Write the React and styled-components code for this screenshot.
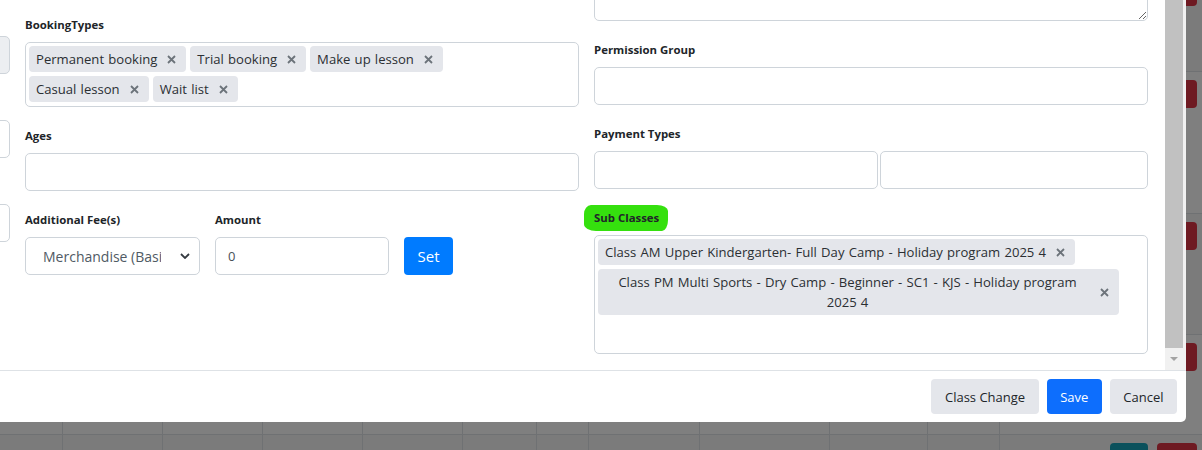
import React from 'react';
import styled, { createGlobalStyle } from 'styled-components';

const GlobalStyle = createGlobalStyle`
  html, body { margin: 0; padding: 0; }
  body {
    font-family: "Open Sans", "Noto Sans", sans-serif;
    color: #212529;
    background: #fff;
  }
  * { box-sizing: border-box; }
`;

const Page = styled.div`
  position: relative;
  width: 1202px;
  height: 450px;
  overflow: hidden;
`;

/* ---- the page behind the dialog ---- */
const BgTable = styled.div`
  display: flex;
  flex-direction: column;
  margin-top: -30px;
  background: #fff;
`;

const BgRow = styled.div`
  display: grid;
  grid-template-columns: 63px 100px 100px 100px 100px 74px 52px 111px 130px 98px 72px 1fr;
  height: ${p => p.$h}px;
  background: ${p => (p.$alt ? '#f7f7f7' : '#fff')};
  border-bottom: 1px solid #dee2e6;
`;

const BgCell = styled.div`
  border-right: 1px solid #dee2e6;
`;

const BgActions = styled.div`
  display: flex;
  justify-content: flex-end;
  align-items: flex-start;
  gap: 9px;
  padding: 8px 5px 0 0;
`;

const BgBtn = styled.div`
  width: ${p => p.$w}px;
  height: 28px;
  border-radius: 4px;
  background: ${p => p.$color};
`;

const Backdrop = styled.div`
  position: absolute;
  inset: 0;
  background: rgba(0, 0, 0, 0.5);
`;

/* ---- dialog ---- */
const Modal = styled.div`
  position: absolute;
  left: -560px;
  top: -60px;
  width: 1746px;
  background: #fff;
  border-radius: 0 0 5px 5px;
  display: flex;
  flex-direction: column;
`;

const Body = styled.div`
  display: flex;
  height: 430px;
`;

const Form = styled.div`
  flex: 1;
  display: grid;
  grid-template-columns: repeat(3, 554px);
  column-gap: 15px;
  padding-left: 16px;
  align-items: start;
`;

const Column = styled.div`
  display: flex;
  flex-direction: column;
  gap: 20px;
  padding-top: ${p => p.$top}px;
`;

const Field = styled.div`
  display: flex;
  flex-direction: column;
  width: 100%;
`;

const Label = styled.label`
  min-height: 18px;
  font-size: 11.4px;
  font-weight: 700;
  line-height: 18px;
  margin-bottom: 8px;
  color: #212529;
`;

const Marker = styled.span`
  align-self: flex-start;
  background: #35e00e;
  padding: 5px 9px 6px 10px;
  margin: -5px -9px -6px -10px;
  border-radius: 7px 11px 6px 12px / 9px 6px 11px 7px;
`;

const Input = styled.input`
  height: 38px;
  width: 100%;
  border: 1px solid #ced4da;
  border-radius: 5px;
  padding: 0 12px;
  font-family: inherit;
  font-size: 13px;
  color: #495057;
  background: ${p => (p.disabled ? '#eceef1' : '#fff')};
  outline: none;
`;

const TextArea = styled.textarea`
  height: 55px;
  width: 100%;
  border: 1px solid #ced4da;
  border-radius: 5px;
  resize: vertical;
  font-family: inherit;
  display: block;
`;

const TagBox = styled.div`
  display: flex;
  flex-wrap: wrap;
  align-content: flex-start;
  gap: 4px;
  min-height: ${p => p.$h}px;
  padding: 3px 28px 4px 3px;
  border: 1px solid #ced4da;
  border-radius: 5px;
`;

const Tag = styled.span`
  display: inline-flex;
  align-items: center;
  gap: 10px;
  max-width: 100%;
  padding: 3px 10px 3px 7px;
  border-radius: 4px;
  background: #e4e6eb;
  font-size: 13.1px;
  word-spacing: 0.8px;
  line-height: 20px;
  color: #2b2f33;
`;

const TagText = styled.span`
  text-align: center;
`;

const Remove = styled.svg`
  flex: none;
  width: 9px;
  height: 9px;
  stroke: #6c737a;
  stroke-width: 1.8;
`;

const Pair = styled.div`
  display: grid;
  grid-template-columns: 284px 1fr;
  gap: 2px;
`;

const FeeRow = styled.div`
  display: grid;
  grid-template-columns: 175px 174px auto;
  column-gap: 15px;
  align-items: end;
  justify-items: start;
`;

const SelectWrap = styled.div`
  position: relative;
  width: 100%;
`;

const Select = styled.select`
  appearance: none;
  width: 100%;
  height: 38px;
  border: 1px solid #ced4da;
  border-radius: 5px;
  padding: 0 38px 0 17px;
  font-family: inherit;
  font-size: 14px;
  color: #505a64;
  background: #fff;
`;

const Chevron = styled.svg`
  position: absolute;
  right: 10px;
  top: 16px;
  width: 10px;
  height: 6px;
  stroke: #343a40;
  stroke-width: 1.8;
  fill: none;
  pointer-events: none;
`;

const Button = styled.button`
  height: ${p => p.$h || 35}px;
  padding: 0 13.5px;
  border: none;
  border-radius: 4px;
  font-family: inherit;
  font-size: ${p => p.$fs || 13}px;
  color: ${p => (p.$primary ? '#fff' : '#212529')};
  background: ${p => (p.$primary ? p.$primary : '#e4e6eb')};
`;

const ScrollBar = styled.div`
  width: 21px;
  display: flex;
  flex-direction: column;
  background: #f1f1f1;
`;

const Thumb = styled.div`
  flex: 1;
  margin-right: 3px;
  background: #c1c1c1;
`;

const ArrowBox = styled.div`
  height: 22px;
  display: flex;
  align-items: center;
  justify-content: center;
  padding-right: 3px;
`;

const Arrow = styled.div`
  width: 0;
  height: 0;
  border-left: 4px solid transparent;
  border-right: 4px solid transparent;
  border-top: 4px solid #a3a3a3;
`;

const Footer = styled.div`
  height: 52px;
  display: flex;
  justify-content: flex-end;
  align-items: center;
  gap: 8px;
  padding: 0 9px;
  border-top: 1px solid #dee2e6;
`;

const X = () => (
  <Remove viewBox="0 0 9 9">
    <path d="M1 1L8 8M8 1L1 8" />
  </Remove>
);

const Chip = ({ children }) => (
  <Tag>
    <TagText>{children}</TagText>
    <X />
  </Tag>
);

const bgRows = [
  { h: 102, alt: true },
  { h: 142 },
  { h: 121, alt: true },
  { h: 100 },
  { h: 60, alt: true },
];

export default function App() {
  return (
    <Page>
      <GlobalStyle />
      <BgTable>
        {bgRows.map((r, i) => (
          <BgRow key={i} $h={r.h} $alt={r.alt}>
            {Array.from({ length: 11 }).map((_, j) => (
              <BgCell key={j} />
            ))}
            <BgActions>
              <BgBtn $w={38} $color="#17a2b8" />
              <BgBtn $w={40} $color="#dc3545" />
            </BgActions>
          </BgRow>
        ))}
      </BgTable>
      <Backdrop />
      <Modal>
        <Body>
          <Form>
            {/* first column is scrolled out of view to the left */}
            <Column $top={70}>
              <Field>
                <Label />
                <Input disabled />
              </Field>
              <Field>
                <Label />
                <Input />
              </Field>
              <Field>
                <Label />
                <Input />
              </Field>
            </Column>
            <Column $top={76}>
              <Field>
                <Label>BookingTypes</Label>
                <TagBox $h={65}>
                  <Chip>Permanent booking</Chip>
                  <Chip>Trial booking</Chip>
                  <Chip>Make up lesson</Chip>
                  <Chip>Casual lesson</Chip>
                  <Chip>Wait list</Chip>
                </TagBox>
              </Field>
              <Field>
                <Label>Ages</Label>
                <Input />
              </Field>
              <FeeRow>
                <Field>
                  <Label>Additional Fee(s)</Label>
                  <SelectWrap>
                    <Select defaultValue="m">
                      <option value="m">Merchandise (Basic)</option>
                    </Select>
                    <Chevron viewBox="0 0 10 6">
                      <path d="M1 1L5 5L9 1" />
                    </Chevron>
                  </SelectWrap>
                </Field>
                <Field>
                  <Label>Amount</Label>
                  <Input defaultValue="0" />
                </Field>
                <Button $primary="#007bff" $h={38} $fs={15}>Set</Button>
              </FeeRow>
            </Column>
            <Column $top={0}>
              <Field>
                <Label />
                <TextArea />
              </Field>
              <Field>
                <Label>Permission Group</Label>
                <Input />
              </Field>
              <Field>
                <Label>Payment Types</Label>
                <Pair>
                  <Input />
                  <Input />
                </Pair>
              </Field>
              <Field>
                <Label>
                  <Marker>Sub Classes</Marker>
                </Label>
                <TagBox $h={119}>
                  <Chip>Class AM Upper Kindergarten- Full Day Camp - Holiday program 2025 4</Chip>
                  <Chip>Class PM Multi Sports - Dry Camp - Beginner - SC1 - KJS - Holiday program 2025 4</Chip>
                </TagBox>
              </Field>
            </Column>
          </Form>
          <ScrollBar>
            <Thumb />
            <ArrowBox>
              <Arrow />
            </ArrowBox>
          </ScrollBar>
        </Body>
        <Footer>
          <Button>Class Change</Button>
          <Button $primary="#0d6efd">Save</Button>
          <Button>Cancel</Button>
        </Footer>
      </Modal>
    </Page>
  );
}
